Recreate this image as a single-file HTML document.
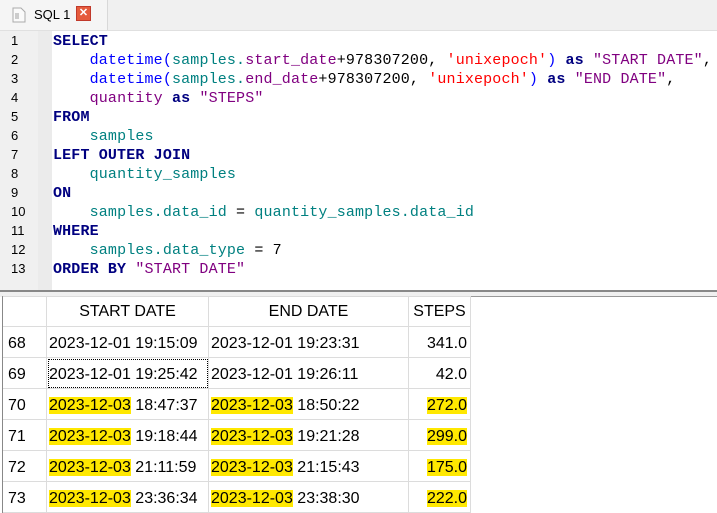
<!DOCTYPE html>
<html><head><style>
body{margin:0;width:717px;height:512px;overflow:hidden;background:#fff;position:relative;font-family:"Liberation Sans",sans-serif}
.tabbar{position:absolute;left:0;top:0;width:717px;height:30px;background:#f0f0f0;border-bottom:1px solid #e0e0e0}
.tab{position:absolute;left:0;top:0;width:107px;height:30px;background:#f5f5f5;border-right:1px solid #d8d8d8}
.gut{position:absolute;left:0;top:31px;width:38px;height:259px;background:#f0f0f0}
.dots{position:absolute;left:38px;top:31px;width:14px;height:259px;background-image:radial-gradient(#ccc 0.6px,transparent 0.8px);background-size:2px 2px;background-color:#f7f7f7}
.ln{position:absolute;left:11px;font:13px "Liberation Sans",sans-serif;color:#000}
.code{position:absolute;left:53px;top:32px;font:15px/19px "Liberation Mono",monospace;white-space:pre;letter-spacing:0.15px}
.k{color:#000080;font-weight:bold}.f{color:#0000ff}.t{color:#008080}.c{color:#800080}.s{color:#ff0000}.b{color:#0000ff}
.split{position:absolute;left:0;top:290px;width:717px;height:2px;background:#888}
.band{position:absolute;left:0;top:292px;width:717px;height:5px;background:#f0f0f0}
.grid{position:absolute;left:2px;top:296px;width:715px;height:216px;border-left:1px solid #888;border-top:1px solid #999;background:#fff}
table{position:absolute;left:3px;top:296px;border-collapse:collapse;font:16px "Liberation Sans",sans-serif}
td{height:27px;padding-top:3px;border:1px solid #dcdcdc;padding-left:2px;padding-right:2px;padding-bottom:0;white-space:nowrap;line-height:27px}
td.n{width:36px;border-left:none;padding-left:5px}
.h td{text-align:center;height:28px;padding-top:1px;line-height:28px}
td.r{text-align:right;padding-right:3px}
.y{background:#ffe800}
</style></head><body>
<div class="tabbar"><div class="tab">
<svg style="position:absolute;left:12px;top:7px" width="14" height="16"><path d="M1 1h8l4 4v10H1z" fill="#fafafa" stroke="#aaa"/><rect x="3" y="6" width="4" height="6" fill="#ccc"/></svg>
<span style="position:absolute;left:34px;top:7px;font-size:13px">SQL 1</span>
<div style="position:absolute;left:76px;top:6px;width:13px;height:13px;background:#e55b3c;border:1px solid #c0392b;color:#fff;font:bold 11px/13px sans-serif;text-align:center">✕</div>
</div></div>
<div class="gut"></div><div class="dots"></div>
<div class="ln" style="top:33px">1</div><div class="ln" style="top:52px">2</div><div class="ln" style="top:71px">3</div><div class="ln" style="top:90px">4</div><div class="ln" style="top:109px">5</div><div class="ln" style="top:128px">6</div><div class="ln" style="top:147px">7</div><div class="ln" style="top:166px">8</div><div class="ln" style="top:185px">9</div><div class="ln" style="top:204px">10</div><div class="ln" style="top:223px">11</div><div class="ln" style="top:242px">12</div><div class="ln" style="top:261px">13</div>
<div class="code"><span class="k">SELECT</span>
    <span class="f">datetime(</span><span class="t">samples.</span><span class="c">start_date</span>+978307200, <span class="s">'unixepoch'</span><span class="b">)</span> <span class="k">as</span> <span class="c">"START DATE"</span>,
    <span class="f">datetime(</span><span class="t">samples.</span><span class="c">end_date</span>+978307200, <span class="s">'unixepoch'</span><span class="b">)</span> <span class="k">as</span> <span class="c">"END DATE"</span>,
    <span class="c">quantity</span> <span class="k">as</span> <span class="c">"STEPS"</span>
<span class="k">FROM</span>
    <span class="t">samples</span>
<span class="k">LEFT OUTER JOIN</span>
    <span class="t">quantity_samples</span>
<span class="k">ON</span>
    <span class="t">samples.data_id</span> = <span class="t">quantity_samples.data_id</span>
<span class="k">WHERE</span>
    <span class="t">samples.data_type</span> = 7
<span class="k">ORDER BY</span> <span class="c">"START DATE"</span></div>
<div class="split"></div><div class="band"></div><div class="grid"></div>
<table>
<tr class="h"><td class="n"></td><td style="width:157px">START DATE</td><td style="width:195px">END DATE</td><td style="width:57px">STEPS</td></tr>
<tr><td class="n">68</td><td>2023-12-01 19:15:09</td><td>2023-12-01 19:23:31</td><td class="r">341.0</td></tr>
<tr><td class="n">69</td><td style="outline:1px dotted #000;outline-offset:-2px">2023-12-01 19:25:42</td><td>2023-12-01 19:26:11</td><td class="r">42.0</td></tr>
<tr><td class="n">70</td><td><span class="y">2023-12-03</span> 18:47:37</td><td><span class="y">2023-12-03</span> 18:50:22</td><td class="r"><span class="y">272.0</span></td></tr>
<tr><td class="n">71</td><td><span class="y">2023-12-03</span> 19:18:44</td><td><span class="y">2023-12-03</span> 19:21:28</td><td class="r"><span class="y">299.0</span></td></tr>
<tr><td class="n">72</td><td><span class="y">2023-12-03</span> 21:11:59</td><td><span class="y">2023-12-03</span> 21:15:43</td><td class="r"><span class="y">175.0</span></td></tr>
<tr><td class="n">73</td><td><span class="y">2023-12-03</span> 23:36:34</td><td><span class="y">2023-12-03</span> 23:38:30</td><td class="r"><span class="y">222.0</span></td></tr>
</table>
</body></html>
